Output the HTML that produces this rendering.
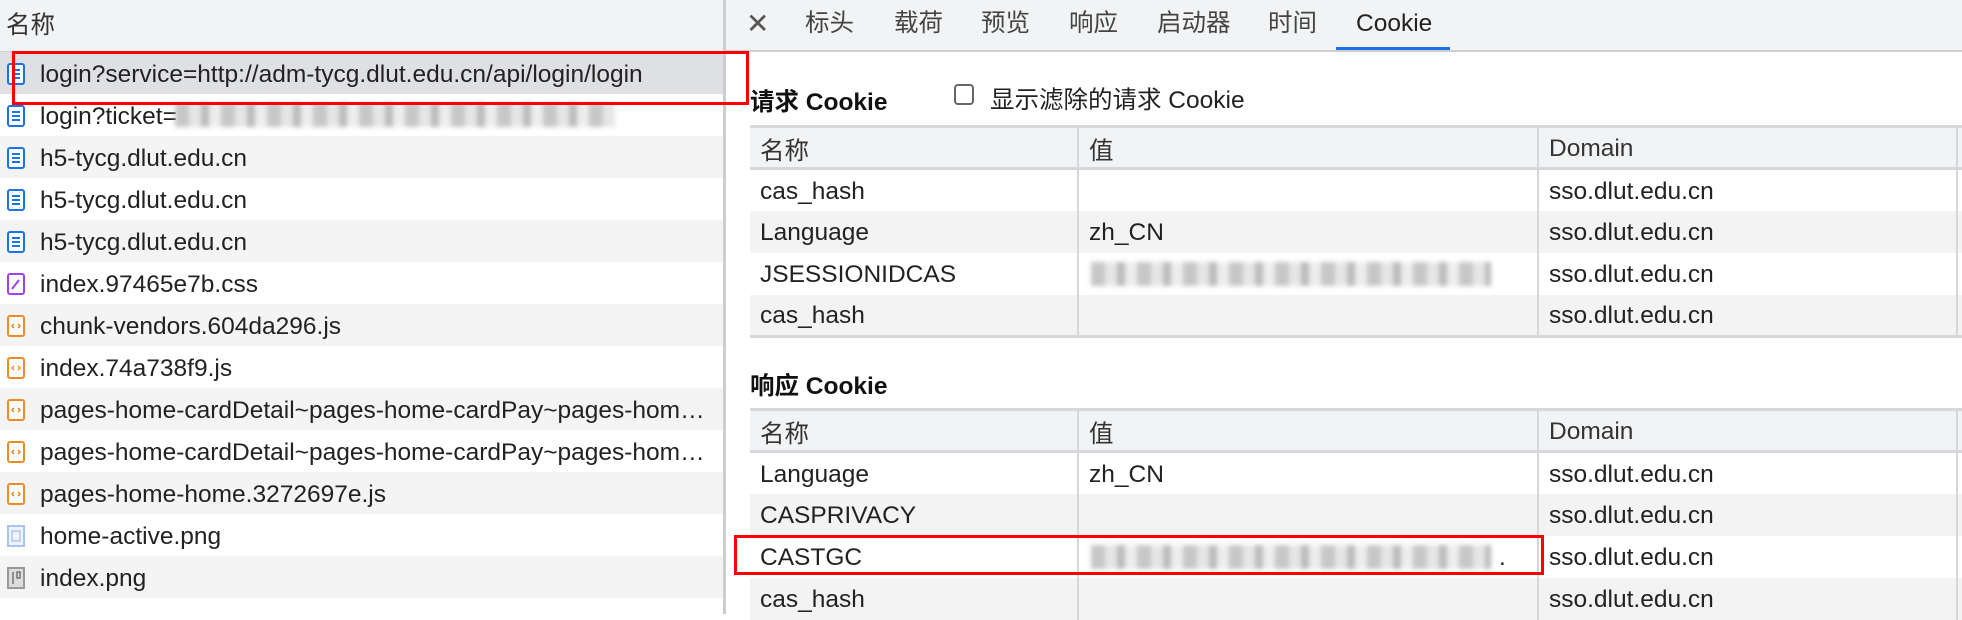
<!DOCTYPE html>
<html><head><meta charset="utf-8"><style>
*{box-sizing:border-box;margin:0;padding:0}
body{width:1962px;height:614px;overflow:hidden;background:#fff;font-family:"Liberation Sans","Noto Sans CJK SC",sans-serif;color:#222;font-size:24.5px;position:relative}
.abs{position:absolute}
#left{left:0;top:0;width:723px;height:614px;background:#fff;overflow:hidden}
#lh{left:0;top:0;width:723px;height:52px;background:#f1f3f4;border-bottom:1px solid #d0d0d0;line-height:52px;padding-left:6px;color:#333}
.row{position:absolute;left:0;width:723px;height:42px;line-height:46px;white-space:nowrap}
.row span{position:absolute;left:40px}
.row svg{position:absolute;left:7px;top:11px}
.g{background:#f4f4f4}
#div{left:723px;top:0;width:3px;height:614px;background:#cbcdd1}
#tabs{left:726px;top:0;width:1236px;height:52px;background:#f1f3f4;border-bottom:2px solid #cbcdd1}
.tab{position:absolute;top:0;line-height:48px;color:#444}
table{position:absolute;left:750px;width:1230px;border-collapse:collapse;font-size:24.5px;border-top:3px solid #d5d7da}
td{height:42px;padding-left:10px;padding-top:3px;border-left:2px solid #d5d7da;color:#222;white-space:nowrap;position:relative}
tr.h td{background:#f1f3f4;border-bottom:3px solid #d5d7da;color:#333}
tr.gr td{background:#f3f3f3}
.blur{position:absolute;height:24px;top:9px;background:repeating-linear-gradient(90deg,#b5b5b5 0 14px,#dedede 14px 26px,#a5a5a5 26px 34px,#e8e8e8 34px 46px);filter:blur(2.5px);opacity:.75}
.red{position:absolute;border:3px solid #f00}
h3{position:absolute;font-size:24.5px;font-weight:bold;color:#111}
</style></head><body>
<svg width="0" height="0" style="position:absolute"><defs>
<symbol id="doc" viewBox="0 0 18 22"><rect x="1" y="1" width="16" height="20" rx="2" fill="#fff" stroke="#1a73e8" stroke-width="2"/><path d="M5 7h8M5 11h8M5 15h8" stroke="#1a73e8" stroke-width="2"/></symbol>
<symbol id="js" viewBox="0 0 18 22"><rect x="1" y="1" width="16" height="20" rx="2" fill="#fff" stroke="#f08a24" stroke-width="2"/><path d="M7 9l-2 2 2 2M11 9l2 2-2 2" stroke="#f08a24" stroke-width="1.5" fill="none"/></symbol>
</defs></svg>
<div id="left" class="abs">
<div id="lh" class="abs">名称</div>
<div class="row" style="top:52px;background:#dfe0e3"><svg width="18" height="22"><use href="#doc"/></svg><span>login?service=http://adm-tycg.dlut.edu.cn/api/login/login</span></div>
<div class="row" style="top:94px"><svg width="18" height="22"><use href="#doc"/></svg><span>login?ticket=</span><div class="blur" style="left:175px;width:440px"></div></div>
<div class="row g" style="top:136px"><svg width="18" height="22"><use href="#doc"/></svg><span>h5-tycg.dlut.edu.cn</span></div>
<div class="row" style="top:178px"><svg width="18" height="22"><use href="#doc"/></svg><span>h5-tycg.dlut.edu.cn</span></div>
<div class="row g" style="top:220px"><svg width="18" height="22"><use href="#doc"/></svg><span>h5-tycg.dlut.edu.cn</span></div>
<div class="row" style="top:262px"><svg width="18" height="22" viewBox="0 0 18 22"><rect x="1" y="1" width="16" height="20" rx="2" fill="#fff" stroke="#a142f4" stroke-width="2"/><path d="M5 16l7-9" stroke="#a142f4" stroke-width="2"/></svg><span>index.97465e7b.css</span></div>
<div class="row g" style="top:304px"><svg width="18" height="22"><use href="#js"/></svg><span>chunk-vendors.604da296.js</span></div>
<div class="row" style="top:346px"><svg width="18" height="22"><use href="#js"/></svg><span>index.74a738f9.js</span></div>
<div class="row g" style="top:388px"><svg width="18" height="22"><use href="#js"/></svg><span>pages-home-cardDetail~pages-home-cardPay~pages-hom…</span></div>
<div class="row" style="top:430px"><svg width="18" height="22"><use href="#js"/></svg><span>pages-home-cardDetail~pages-home-cardPay~pages-hom…</span></div>
<div class="row g" style="top:472px"><svg width="18" height="22"><use href="#js"/></svg><span>pages-home-home.3272697e.js</span></div>
<div class="row" style="top:514px"><svg width="18" height="22" viewBox="0 0 18 22"><rect x="1" y="1" width="16" height="20" fill="#eef3fd" stroke="#aac4f0" stroke-width="2"/><rect x="5" y="6" width="8" height="10" fill="none" stroke="#aac4f0" stroke-width="1.5"/></svg><span>home-active.png</span></div>
<div class="row g" style="top:556px"><svg width="18" height="22" viewBox="0 0 18 22"><rect x="1" y="1" width="16" height="20" fill="#ddd" stroke="#999" stroke-width="2"/><path d="M6 5v12M10 5h3v6h-3z" stroke="#777" stroke-width="1.5" fill="none"/></svg><span>index.png</span></div>
<div class="row" style="top:598px"></div>
</div>
<div id="div" class="abs"></div>
<div id="tabs" class="abs">
<div class="tab" style="left:20px;font-size:28px;color:#555">✕</div>
<div class="tab" style="left:79px">标头</div>
<div class="tab" style="left:168px">载荷</div>
<div class="tab" style="left:255px">预览</div>
<div class="tab" style="left:343px">响应</div>
<div class="tab" style="left:431px">启动器</div>
<div class="tab" style="left:542px">时间</div>
<div class="tab" style="left:630px;color:#222">Cookie</div>
<div class="abs" style="left:610px;top:47px;width:114px;height:3px;background:#1a73e8"></div>
</div>
<h3 style="left:750px;top:83px">请求 Cookie</h3>
<div class="abs" style="left:954px;top:84px;width:20px;height:21px;border:2px solid #666;border-radius:4px"></div>
<div class="abs" style="left:990px;top:81px;color:#222">显示滤除的请求 Cookie</div>
<table style="top:125px">
<tr class="h"><td style="width:328px;border-left:none">名称</td><td style="width:460px">值</td><td style="width:419px">Domain</td><td style="width:23px"></td></tr>
<tr><td style="border-left:none">cas_hash</td><td></td><td>sso.dlut.edu.cn</td><td></td></tr>
<tr class="gr"><td style="border-left:none">Language</td><td>zh_CN</td><td>sso.dlut.edu.cn</td><td></td></tr>
<tr><td style="border-left:none">JSESSIONIDCAS</td><td><div class="blur" style="left:12px;width:400px"></div></td><td>sso.dlut.edu.cn</td><td></td></tr>
<tr class="gr"><td style="border-left:none;border-bottom:3px solid #d5d7da">cas_hash</td><td style="border-bottom:3px solid #d5d7da"></td><td style="border-bottom:3px solid #d5d7da">sso.dlut.edu.cn</td><td style="border-bottom:3px solid #d5d7da"></td></tr>
</table>
<h3 style="left:750px;top:367px">响应 Cookie</h3>
<table style="top:408px">
<tr class="h"><td style="width:328px;border-left:none">名称</td><td style="width:460px">值</td><td style="width:419px">Domain</td><td style="width:23px"></td></tr>
<tr><td style="border-left:none">Language</td><td>zh_CN</td><td>sso.dlut.edu.cn</td><td></td></tr>
<tr class="gr"><td style="border-left:none">CASPRIVACY</td><td></td><td>sso.dlut.edu.cn</td><td></td></tr>
<tr><td style="border-left:none">CASTGC</td><td><div class="blur" style="left:12px;width:400px"></div><span style="position:absolute;left:420px;top:8px">.</span></td><td>sso.dlut.edu.cn</td><td></td></tr>
<tr class="gr"><td style="border-left:none">cas_hash</td><td></td><td>sso.dlut.edu.cn</td><td></td></tr>
</table>
<div class="red" style="left:12px;top:51px;width:737px;height:54px"></div>
<div class="red" style="left:734px;top:535px;width:810px;height:40px"></div>
</body></html>
